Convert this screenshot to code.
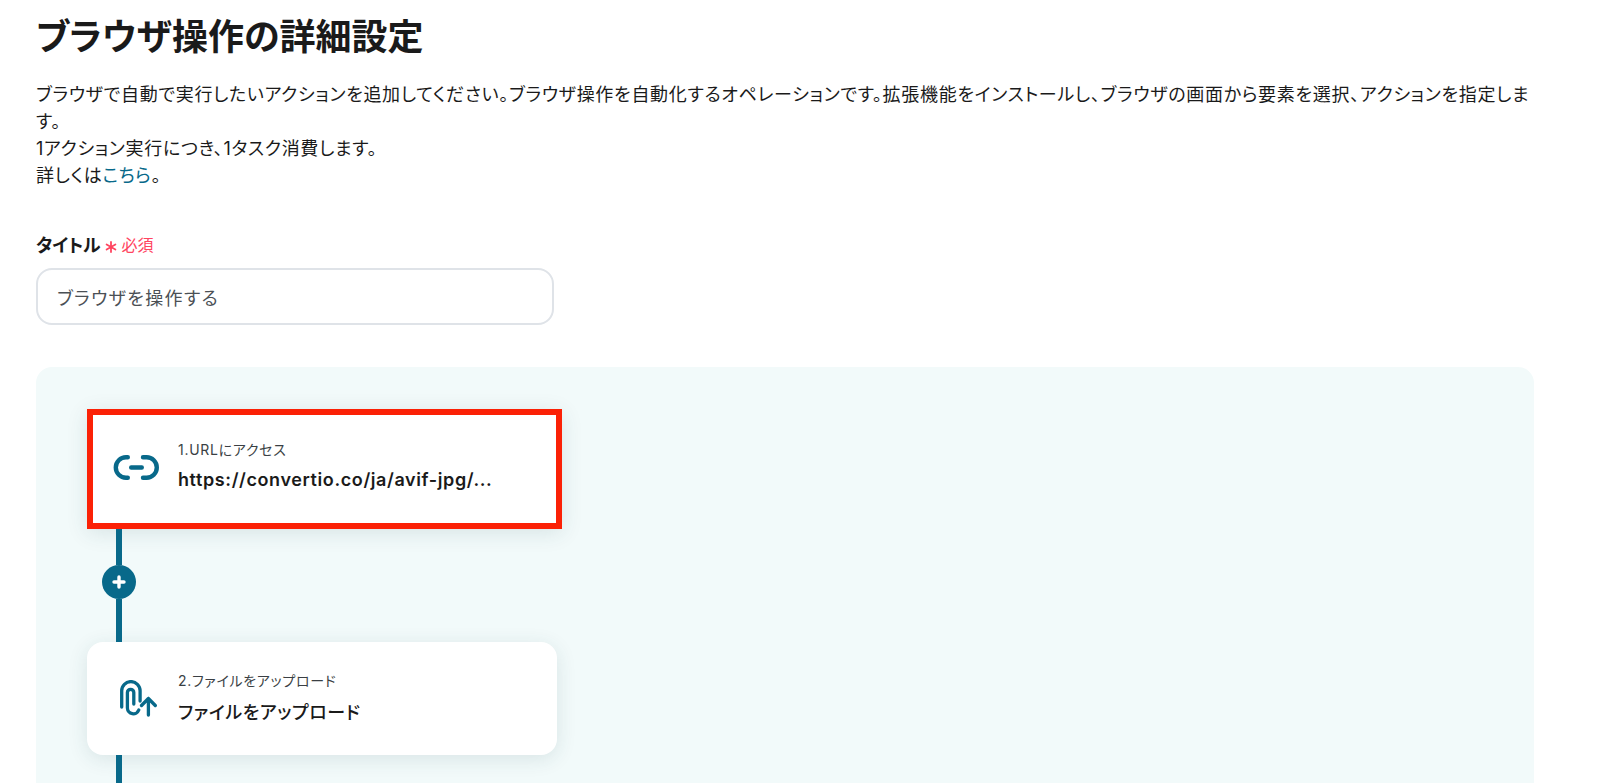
<script>
	const lines = ['1アクション実行につき、1タスク消費します。'];
</script>

<main class="page">
	<h1 class="title">ブラウザ操作の詳細設定</h1>
	<p class="desc">
		ブラウザで自動で実行したいアクションを追加してください。ブラウザ操作を自動化するオペレーションです。拡張機能をインストールし、ブラウザの画面から要素を選択、アクションを指定します。<br />
		{lines[0]}<br />
		詳しくは<a href="#top" class="link">こちら</a>。
	</p>

	<div class="field">
		<div class="field-label">
			<span class="label-text">タイトル</span>
			<svg class="star" width="12" height="12" viewBox="0 0 12 12" fill="none" stroke="#ff4560" stroke-width="1.8" stroke-linecap="round">
				<path d="M6 1v10M1.6 3.5l8.8 5M10.4 3.5l-8.8 5" />
			</svg>
			<span class="required">必須</span>
		</div>
		<div class="input">ブラウザを操作する</div>
	</div>

	<section class="panel">
		<div class="card card-active">
			<div class="icon-slot">
				<svg class="link-icon" width="47" height="25" viewBox="0 0 47 25" fill="none" stroke="#08698a" stroke-width="4.4" stroke-linecap="round">
					<path d="M14.8 2.3H13a10.2 10.2 0 0 0 0 20.4h1.8" />
					<path d="M30 2.3h3.6a10.2 10.2 0 0 1 0 20.4H30" />
					<path d="M18.2 12.5h10.6" />
				</svg>
			</div>
			<div class="card-text">
				<span class="card-label">1.URLにアクセス</span>
				<span class="card-value url">https://convertio.co/ja/avif-jpg/...</span>
			</div>
		</div>

		<div class="connector">
			<span class="line line-top"></span>
			<span class="add">
				<svg width="14" height="14" viewBox="0 0 14 14" fill="none" stroke="#fff" stroke-width="3.4" stroke-linecap="round">
					<path d="M7 2v10M2 7h10" />
				</svg>
			</span>
			<span class="line line-bottom"></span>
		</div>

		<div class="card">
			<div class="icon-slot">
				<svg class="clip" width="37" height="37" viewBox="0 0 37 37" fill="none" stroke="#08698a" stroke-width="3.3" stroke-linecap="round" stroke-linejoin="round">
					<path d="M1.7 27V10.8a9.2 9.2 0 0 1 18.4 0V21" />
					<path d="M13.8 24V12.5a3.2 3.2 0 0 0-6.4 0V28a5.9 5.9 0 0 0 11.4 2" />
					<path d="M28.4 35V18.5M21.5 25.5l6.9-7 6.9 7" />
				</svg>
			</div>
			<div class="card-text">
				<span class="card-label">2.ファイルをアップロード</span>
				<span class="card-value">ファイルをアップロード</span>
			</div>
		</div>

		<div class="connector">
			<span class="line line-rest"></span>
		</div>
	</section>
</main>

<style>
	:global(body) {
		margin: 0;
		background: #fff;
		overflow: hidden;
	}

	.page {
		height: 783px;
		overflow: hidden;
		box-sizing: border-box;
		padding: 10px 66px 0 36px;
		font-family: Inter, "Noto Sans CJK JP", sans-serif;
		font-feature-settings: "palt";
		color: #1a1a1a;
	}

	.title {
		margin: 0;
		font-size: 36px;
		line-height: 54px;
		font-weight: 700;
	}

	.desc {
		margin: 17px 0 0;
		font-size: 18px;
		line-height: 27px;
		letter-spacing: 0.7px;
	}

	.link {
		color: #08698a;
		text-decoration: none;
	}

	.field {
		margin-top: 43px;
	}

	.field-label {
		display: flex;
		align-items: center;
		gap: 4px;
		height: 24px;
	}

	.label-text {
		font-size: 18px;
		font-weight: 600;
		letter-spacing: -0.2px;
	}

	.star {
		margin: 6px 0 0 1px;
	}

	.required {
		font-size: 16px;
		color: #ff4560;
	}

	.input {
		display: flex;
		align-items: center;
		box-sizing: border-box;
		width: 518px;
		height: 57px;
		margin-top: 12px;
		padding-left: 19px;
		border: 2px solid #dfe3e8;
		border-radius: 16px;
		font-size: 18px;
		letter-spacing: 1.35px;
		color: #4b5055;
	}

	.panel {
		margin-top: 42px;
		height: 500px;
		padding: 42px 51px 0;
		background: #f2fafa;
		border-radius: 16px;
	}

	.card {
		display: flex;
		align-items: center;
		box-sizing: border-box;
		width: 470px;
		height: 113px;
		padding-left: 26px;
		background: #fff;
		border-radius: 16px;
		box-shadow: 0 4px 20px rgba(30, 70, 80, 0.12);
	}

	.card-active {
		width: 475px;
		height: 120px;
		padding-left: 20px;
		border: 6px solid #fb2106;
		border-radius: 0;
	}

	.icon-slot {
		flex: 0 0 65px;
		display: flex;
	}

	.link-icon {
		margin-bottom: 4px;
	}

	.clip {
		margin-left: 7px;
	}

	.card-text {
		display: flex;
		flex-direction: column;
		gap: 12px;
		padding-bottom: 1px;
		letter-spacing: 0.7px;
	}

	.card-active .card-text {
		gap: 10px;
		padding-bottom: 7px;
	}

	.card-label {
		font-size: 14px;
		line-height: 18px;
		color: #3a3f44;
	}

	.card-value {
		font-size: 18px;
		line-height: 22px;
		font-weight: 500;
		letter-spacing: 0.6px;
	}

	.url {
		font-weight: 600;
		letter-spacing: 0.6px;
	}

	.connector {
		display: flex;
		flex-direction: column;
		align-items: center;
		width: 34px;
		margin-left: 15px;
	}

	.line {
		display: block;
		width: 6px;
		background: #08698a;
	}

	.line-top {
		height: 36px;
	}

	.line-bottom {
		height: 43px;
	}

	.line-rest {
		height: 60px;
	}

	.add {
		display: flex;
		align-items: center;
		justify-content: center;
		width: 34px;
		height: 34px;
		border-radius: 50%;
		background: #08698a;
	}
</style>
